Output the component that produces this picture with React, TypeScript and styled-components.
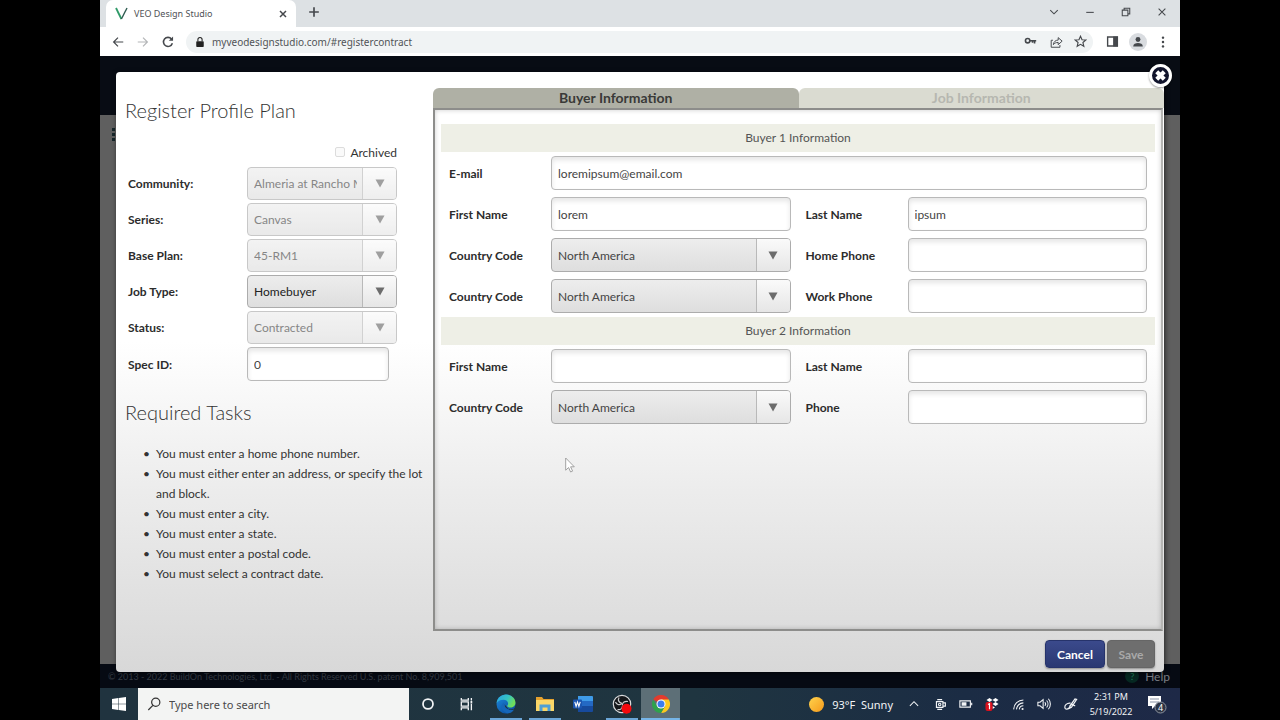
import React, { useId } from 'react';
import styled, { createGlobalStyle, css } from 'styled-components';

const system = `'Noto Sans', 'Open Sans', 'Liberation Sans', sans-serif`;
const lato = `Lato, 'Liberation Sans', sans-serif`;

const GlobalStyle = createGlobalStyle`
  *, *::before, *::after { box-sizing: border-box; }
  body { margin: 0; background: #000; font-family: ${lato}; font-size: 12px; color: #222; }
  button, input, select { font-family: inherit; font-size: inherit; }
  h1, h2, h3, ul { margin: 0; padding: 0; font-weight: inherit; }
`;

const Desktop = styled.div`
  display: flex;
  flex-direction: column;
  min-height: 100vh;
  margin: 0 100px;
`;

/* ---------- browser chrome ---------- */

const TabStrip = styled.div`
  display: flex;
  height: 27px;
  padding-left: 6px;
  background: #dde1e4;
  font-family: ${system};
`;

const BrowserTab = styled.div`
  display: flex;
  align-items: center;
  gap: 6px;
  width: 190px;
  padding: 0 7px 0 9px;
  background: #fff;
  border-radius: 7px 7px 0 0;
  font-size: 9px;
  color: #505256;

  span { flex: 1; }
`;

const BareButton = styled.button`
  display: grid;
  place-items: center;
  flex: none;
  padding: 0;
  border: 0;
  background: none;
  color: #45484c;
`;

const StripButton = styled(BareButton)`
  width: 36px;
  height: 24px;
`;

const WindowControls = styled.div`
  display: flex;
  margin-left: auto;
`;

const Toolbar = styled.div`
  display: flex;
  align-items: center;
  height: 29px;
  padding: 0 5px;
  background: #fff;
  font-family: ${system};
`;

const ToolButton = styled(BareButton)<{ $faint?: boolean }>`
  width: 25px;
  height: 24px;
  color: ${p => (p.$faint ? '#b4b6b8' : '#45484c')};
`;

const AddressBar = styled.div`
  display: flex;
  align-items: center;
  flex: 1;
  height: 22px;
  margin: 0 7px 0 6px;
  padding-left: 8px;
  background: #f0f3f4;
  border-radius: 11px;
`;

const Address = styled.input`
  flex: 1;
  min-width: 0;
  margin-left: 6px;
  padding: 0;
  border: 0;
  outline: 0;
  background: none;
  font-size: 10px;
  color: #505357;
`;

const Avatar = styled.span`
  display: grid;
  place-items: center;
  width: 18px;
  height: 18px;
  border-radius: 50%;
  background: #d9dce0;
`;

/* ---------- page ---------- */

const Page = styled.div`
  display: grid;
  flex: 1;
  grid-template: 1fr / 1fr;
  overflow: hidden;
`;

const Backdrop = styled.div`
  display: flex;
  flex-direction: column;
  grid-area: 1 / 1;
  background: #5f5f5f;
`;

const PageHeader = styled.div`
  height: 59px;
  background: #080c14;
`;

const PageBody = styled.div`
  flex: 1;
  padding: 13px 12px;
`;

const PageFooter = styled.footer`
  display: flex;
  align-items: center;
  justify-content: space-between;
  height: 24px;
  padding: 0 10px 0 8px;
  background: #060a13;
  font-size: 9px;
  color: #353a42;
`;

const HelpLink = styled.a`
  display: flex;
  align-items: center;
  gap: 6px;
  font-size: 12px;
  color: #7b7e84;
  text-decoration: none;
`;

const HelpBadge = styled.span`
  width: 14px;
  border-radius: 50%;
  background: #062821;
  color: #1d7a55;
  font-size: 10px;
  line-height: 14px;
  text-align: center;
`;

const Dialog = styled.section`
  position: relative;
  display: grid;
  grid-area: 1 / 1;
  grid-template: 1fr auto / 317px 1fr;
  margin: 16px;
  border-radius: 4px;
  background: linear-gradient(#fff 0, #fff 45%, #ececec 70%, #d8d8d8 100%);
  box-shadow: 1px 1px 5px #0009;
`;

const CloseButton = styled(BareButton)`
  position: absolute;
  top: -8px;
  right: -8px;
  width: 23px;
  height: 23px;
  border: 3px solid #fff;
  border-radius: 50%;
  background: #11142c;
  color: #fff;
  box-shadow: 0 1px 2px #0006;
`;

const Aside = styled.div`
  padding: 26px 8px 0 9px;
`;

const Heading = styled.h2`
  font-size: 20px;
  font-weight: 300;
  line-height: 24px;
  color: #333;
`;

const ArchivedLabel = styled.label`
  display: flex;
  align-items: center;
  justify-content: flex-end;
  gap: 5px;
  height: 20px;
  margin: 20px 28px 5px 0;
  font-size: 12px;
  color: #333;

  input {
    appearance: none;
    width: 10px;
    height: 10px;
    margin: 0;
    border: 1px solid #dcdcdc;
    border-radius: 2px;
    background: #fafafa;
  }
`;

const ProfileForm = styled.form`
  display: grid;
  grid-template-columns: 119px 150px;
  row-gap: 3px;
  align-items: center;
  padding-left: 3px;
  margin-bottom: 19px;
`;

const FieldLabel = styled.label<{ $second?: boolean }>`
  padding-left: ${p => (p.$second ? 15 : 0)}px;
  font-size: 12px;
  font-weight: 700;
  color: #2c2c2c;
`;

const boxStyle = css`
  width: 100%;
  height: 34px;
  padding: 0 6px;
  border: 1px solid #b9b9b9;
  border-radius: 4px;
  outline: 0;
  font-size: 12px;
`;

const TextBox = styled.input<{ $wide?: boolean; $narrow?: boolean }>`
  ${boxStyle}
  grid-column: ${p => (p.$wide ? 'span 3' : 'auto')};
  width: ${p => (p.$narrow ? '142px' : '100%')};
  background: #fff;
  box-shadow: inset 0 3px 5px #0000001a;
  color: #444;
`;

const SelectShell = styled.div<{ $muted?: boolean }>`
  display: grid;
  opacity: ${p => (p.$muted ? 0.65 : 1)};
`;

const SelectBox = styled.select<{ $short?: boolean; $dark?: boolean }>`
  ${boxStyle}
  grid-area: 1 / 1;
  height: ${p => (p.$short ? 33 : 34)}px;
  padding-right: 39px;
  appearance: none;
  border-color: #acacac;
  background: linear-gradient(#ededed, #dedede);
  color: ${p => (p.$dark ? '#222' : '#444')};
  opacity: 1;
`;

const SelectArrow = styled.span`
  display: grid;
  place-items: center;
  grid-area: 1 / 1;
  justify-self: end;
  width: 34px;
  margin: 1px 1px 1px 0;
  border-left: 1px solid #b9b9b9;
  border-radius: 0 3px 3px 0;
  background: linear-gradient(#fafafa, #e6e6e6);
  color: #6c6c6c;
  pointer-events: none;
`;

const TaskList = styled.ul`
  margin-top: 20px;
  padding-left: 31px;
  font-size: 12px;
  line-height: 20px;
  list-style-type: '•\\00a0\\00a0';
  color: #333;
`;

const Main = styled.div`
  display: flex;
  flex-direction: column;
  padding-top: 16px;
`;

const TabList = styled.div`
  display: grid;
  grid-template-columns: 1fr 1fr;
`;

const FormTab = styled.button<{ $active?: boolean }>`
  height: 20px;
  padding: 0;
  border: 0;
  border-radius: 6px 6px 0 0;
  background: ${p => (p.$active ? '#afb0a5' : '#dadbd1')};
  color: ${p => (p.$active ? '#3a3a38' : '#b6b7b0')};
  font-size: 14px;
  font-weight: 700;
  line-height: 20px;
`;

const Panel = styled.div`
  position: relative;
  flex: 1;
  padding: 14px 6px;
  margin-right: 1px;
  border: 2px solid #8d8d8b;
  border-right-color: #b5b5b3;
  box-shadow: inset 0 0 5px #0003;
`;

const Band = styled.h3`
  height: 28px;
  background: #eeefe6;
  color: #555;
  font-size: 12px;
  line-height: 28px;
  text-align: center;
`;

const BuyerFields = styled.div`
  display: grid;
  grid-template-columns: 102px 1fr 117px 1fr;
  row-gap: 7px;
  align-items: center;
  padding: 4px 8px;
`;

const Pointer = styled.svg`
  position: absolute;
  top: 347px;
  left: 130px;
`;

const Actions = styled.div`
  display: flex;
  grid-column: 1 / -1;
  justify-content: flex-end;
  gap: 2px;
  padding: 9px 9px 4px;
`;

const ActionButton = styled.button<{ $primary?: boolean }>`
  width: ${p => (p.$primary ? 60 : 48)}px;
  height: 28px;
  padding: 0;
  border: 1px solid ${p => (p.$primary ? '#26336b' : '#666')};
  border-radius: 4px;
  background: ${p => (p.$primary ? 'linear-gradient(#3b4a8c, #2a3872)' : '#6e6e6e')};
  color: ${p => (p.$primary ? '#fff' : '#a9a9a9')};
  box-shadow: 0 1px 2px #0005;
  font-size: 12px;
  font-weight: 700;
`;

/* ---------- taskbar ---------- */

const Taskbar = styled.div`
  display: flex;
  height: 32px;
  background: linear-gradient(90deg, #20333f, #1f3540 55%, #1b2c44 80%, #1e2947);
  font-family: ${system};
  color: #f2f4f6;
`;

const StartButton = styled(BareButton)`
  width: 38px;
  color: #fff;
`;

const SearchBox = styled.label`
  display: flex;
  align-items: center;
  gap: 8px;
  width: 271px;
  padding-left: 9px;
  background: #f3f4f3;
  color: #333;

  input {
    flex: 1;
    min-width: 0;
    padding: 0;
    border: 0;
    outline: 0;
    background: none;
    font-size: 11px;
  }
  input::placeholder { color: #4a4a4a; opacity: 1; }
`;

const AppStrip = styled.div`
  display: flex;
  width: 271px;
`;

const AppButton = styled(BareButton)<{ $open?: boolean; $active?: boolean }>`
  flex: 1;
  color: #f2f4f6;
  background: ${p =>
    p.$active
      ? 'linear-gradient(#76b5e8, #76b5e8) bottom / 100% 2px no-repeat #5d6f77'
      : p.$open
        ? 'linear-gradient(#6ba5d6, #6ba5d6) bottom / 32px 2px no-repeat'
        : 'none'};
`;

const Tray = styled.div`
  display: flex;
  align-items: center;
  margin-left: auto;
`;

const Weather = styled.div`
  display: flex;
  align-items: center;
  gap: 8px;
  margin-right: 8px;
  font-size: 11px;
  white-space: pre;
`;

const TrayIcon = styled.span`
  display: grid;
  place-items: center;
  width: 26px;
  height: 32px;
`;

const Sun = styled.span`
  width: 15px;
  height: 15px;
  border-radius: 50%;
  background: linear-gradient(135deg, #ffd34d, #f59a1c);
`;

const Clock = styled.div`
  width: 56px;
  font-size: 9px;
  line-height: 15px;
  text-align: center;
`;

const Notices = styled(BareButton)`
  width: 36px;
  height: 32px;
  margin-right: 5px;
  color: #fff;
`;

/* ---------- pieces ---------- */

type IconProps = { children: React.ReactNode; size?: number; box?: number; weight?: number };

function Icon({ children, size = 14, box = 16, weight = 1.4 }: IconProps) {
  return (
    <svg width={size} height={size} viewBox={`0 0 ${box} ${box}`} fill="none" stroke="currentColor" strokeWidth={weight} aria-hidden="true">
      {children}
    </svg>
  );
}

type SelectProps = { label: string; value: string; muted?: boolean; short?: boolean; dark?: boolean };

function SelectField({ label, value, muted, short, dark }: SelectProps) {
  const id = useId();
  return (
    <>
      <FieldLabel htmlFor={id}>{label}</FieldLabel>
      <SelectShell $muted={muted}>
        <SelectBox id={id} $short={short} $dark={dark} disabled={muted}>
          <option>{value}</option>
        </SelectBox>
        <SelectArrow>
          <svg width="10" height="9" viewBox="0 0 10 9" aria-hidden="true">
            <path d="M0.5 0.5h9L5 8.5z" fill="currentColor" />
          </svg>
        </SelectArrow>
      </SelectShell>
    </>
  );
}

type TextProps = { label: string; value?: string; second?: boolean; wide?: boolean; narrow?: boolean };

function TextField({ label, value = '', second, wide, narrow }: TextProps) {
  const id = useId();
  return (
    <>
      <FieldLabel htmlFor={id} $second={second}>{label}</FieldLabel>
      <TextBox id={id} type="text" defaultValue={value} $wide={wide} $narrow={narrow} />
    </>
  );
}

const tasks = [
  'You must enter a home phone number.',
  'You must either enter an address, or specify the lot and block.',
  'You must enter a city.',
  'You must enter a state.',
  'You must enter a postal code.',
  'You must select a contract date.',
];

function Browser() {
  return (
    <>
      <TabStrip>
        <BrowserTab>
          <svg width="13" height="13" viewBox="0 0 13 13" aria-hidden="true">
            <path d="M1 1l5.4 11" stroke="#2f9a68" strokeWidth="1.8" fill="none" />
            <path d="M12 1L6.4 12" stroke="#2e5b50" strokeWidth="1.4" fill="none" />
          </svg>
          <span>VEO Design Studio</span>
          <BareButton aria-label="Close tab">
            <Icon size={12}><path d="M4 4l8 8M12 4l-8 8" strokeWidth="2" /></Icon>
          </BareButton>
        </BrowserTab>
        <StripButton aria-label="New tab">
          <Icon size={14}><path d="M8 2.500v11M2.500 8h11" strokeWidth="1.900" /></Icon>
        </StripButton>
        <WindowControls>
          <StripButton aria-label="Search tabs"><Icon size={12}><path d="M3 5.500l5 5 5-5" /></Icon></StripButton>
          <StripButton aria-label="Minimize"><Icon size={12}><path d="M3 8.500h10" /></Icon></StripButton>
          <StripButton aria-label="Restore">
            <Icon size={12}><path d="M3 5.500h7.500v7.500H3zM5.500 5.500V3H13v7.500h-2.500" /></Icon>
          </StripButton>
          <StripButton aria-label="Close"><Icon size={12}><path d="M3.500 3.500l9 9M12.500 3.500l-9 9" /></Icon></StripButton>
        </WindowControls>
      </TabStrip>
      <Toolbar>
        <ToolButton aria-label="Back"><Icon><path d="M14 8H3M8 3L3 8l5 5" /></Icon></ToolButton>
        <ToolButton aria-label="Forward" $faint><Icon><path d="M2 8h11M8 3l5 5-5 5" /></Icon></ToolButton>
        <ToolButton aria-label="Reload">
          <Icon><path d="M13 9.500A5.200 5.200 0 1 1 12 4.500" strokeWidth="1.800" /><path d="M13.800 1.800v4.900H8.900z" fill="currentColor" stroke="none" /></Icon>
        </ToolButton>
        <AddressBar>
          <Icon size={12}>
            <rect x="3" y="7" width="10" height="7.500" rx="1" fill="currentColor" stroke="none" />
            <path d="M5.200 7V4.800a2.800 2.800 0 0 1 5.600 0V7" />
          </Icon>
          <Address aria-label="Address" defaultValue="myveodesignstudio.com/#registercontract" />
          <ToolButton aria-label="Passwords">
            <Icon size={13}><circle cx="4.500" cy="7" r="2.700" strokeWidth="2" /><path d="M7 7h8M13 7v3.500M10.500 7v2.500" strokeWidth="2" /></Icon>
          </ToolButton>
          <ToolButton aria-label="Share">
            <Icon><path d="M4.500 6H2.500v8h10v-2.500M5 11c.4-3.500 2.500-5 5.500-5.200V3L15 7l-4.500 4V8.500C8 8.500 6.500 9.200 5 11z" strokeWidth="1.100" /></Icon>
          </ToolButton>
          <ToolButton aria-label="Bookmark">
            <Icon size={13}><path d="M8 1.500l1.900 4.300 4.700.4-3.600 3.100 1.100 4.600L8 11.500l-4.100 2.400L5 9.300 1.400 6.200l4.700-.4z" /></Icon>
          </ToolButton>
        </AddressBar>
        <ToolButton aria-label="Side panel">
          <Icon size={13}><path d="M2 2.500h12v11H2z" strokeWidth="1.700" /><path d="M9.500 2.500H14v11H9.500z" fill="currentColor" /></Icon>
        </ToolButton>
        <ToolButton aria-label="Profile">
          <Avatar>
            <Icon size={14}><g fill="currentColor" stroke="none"><circle cx="8" cy="5.200" r="2.800" /><path d="M2.500 13c0-5 11-5 11 0z" /></g></Icon>
          </Avatar>
        </ToolButton>
        <ToolButton aria-label="Menu">
          <Icon><g fill="currentColor" stroke="none"><circle cx="8" cy="3" r="1.400" /><circle cx="8" cy="8" r="1.400" /><circle cx="8" cy="13" r="1.400" /></g></Icon>
        </ToolButton>
      </Toolbar>
    </>
  );
}

function PlanDialog() {
  return (
    <Dialog role="dialog" aria-label="Register Profile Plan">
      <Aside>
        <Heading>Register Profile Plan</Heading>
        <ArchivedLabel><input type="checkbox" disabled />Archived</ArchivedLabel>
        <ProfileForm>
          <SelectField label="Community:" value="Almeria at Rancho M" muted short />
          <SelectField label="Series:" value="Canvas" muted short />
          <SelectField label="Base Plan:" value="45-RM1" muted short />
          <SelectField label="Job Type:" value="Homebuyer" short dark />
          <SelectField label="Status:" value="Contracted" muted short />
          <TextField label="Spec ID:" value="0" narrow />
        </ProfileForm>
        <Heading>Required Tasks</Heading>
        <TaskList>
          {tasks.map(task => <li key={task}>{task}</li>)}
        </TaskList>
      </Aside>
      <Main>
        <TabList role="tablist">
          <FormTab role="tab" aria-selected="true" $active>Buyer Information</FormTab>
          <FormTab role="tab" aria-selected="false">Job Information</FormTab>
        </TabList>
        <Panel role="tabpanel">
          <Band>Buyer 1 Information</Band>
          <BuyerFields>
            <TextField label="E-mail" value="loremipsum@email.com" wide />
            <TextField label="First Name" value="lorem" />
            <TextField label="Last Name" value="ipsum" second />
            <SelectField label="Country Code" value="North America" />
            <TextField label="Home Phone" second />
            <SelectField label="Country Code" value="North America" />
            <TextField label="Work Phone" second />
          </BuyerFields>
          <Band>Buyer 2 Information</Band>
          <BuyerFields>
            <TextField label="First Name" />
            <TextField label="Last Name" second />
            <SelectField label="Country Code" value="North America" />
            <TextField label="Phone" second />
          </BuyerFields>
          <Pointer width="10" height="16" viewBox="0 0 10 16" aria-hidden="true">
            <path d="M0.700 1v12.200l2.900-2.700 2 4.500 2-.9-2-4.300h3.700z" fill="#fff" stroke="#999" strokeWidth="0.900" />
          </Pointer>
        </Panel>
      </Main>
      <Actions>
        <ActionButton type="button" $primary>Cancel</ActionButton>
        <ActionButton type="button" disabled>Save</ActionButton>
      </Actions>
      <CloseButton aria-label="Close dialog">
        <Icon size={15}><path d="M4 4l8 8M12 4l-8 8" strokeWidth="4.500" /></Icon>
      </CloseButton>
    </Dialog>
  );
}

function WindowsTaskbar() {
  return (
    <Taskbar>
      <StartButton aria-label="Start">
        <svg width="14" height="14" viewBox="0 0 14 14" fill="currentColor" aria-hidden="true">
          <path d="M0 2l6.300-.9v5.600H0zM6.800 1L14 0v6.700H6.800zM0 7.200h6.300v5.700L0 12zM6.800 7.200H14V14l-7.200-1z" />
        </svg>
      </StartButton>
      <SearchBox>
        <Icon size={14}><circle cx="10" cy="6" r="4.700" /><path d="M6.700 9.500L1.500 14.800" /></Icon>
        <input type="search" aria-label="Search" placeholder="Type here to search" />
      </SearchBox>
      <AppStrip>
        <AppButton aria-label="Cortana"><Icon size={14}><circle cx="8" cy="8" r="5.700" strokeWidth="2" /></Icon></AppButton>
        <AppButton aria-label="Task view">
          <Icon size={14}><path d="M1.500 1v2.500h8V1M1.500 15v-2.500h8V15M1.500 5.500h8v5h-8zM13 1v3M13 8v7" strokeWidth="1.500" /><path d="M12 4.500h2v3h-2z" fill="currentColor" stroke="none" /></Icon>
        </AppButton>
        <AppButton aria-label="Edge" $open>
          <svg width="20" height="20" viewBox="0 0 20 20" aria-hidden="true">
            <defs>
              <linearGradient id="edgeTop" x1="0" y1="0" x2="1" y2="0.400"><stop offset="0" stopColor="#2aa3e6" /><stop offset="0.600" stopColor="#35c4c4" /><stop offset="1" stopColor="#6fdd5a" /></linearGradient>
              <linearGradient id="edgeLow" x1="0" y1="0" x2="0.700" y2="1"><stop offset="0" stopColor="#1d8be0" /><stop offset="1" stopColor="#0c4f9e" /></linearGradient>
            </defs>
            <circle cx="10" cy="10" r="9.500" fill="url(#edgeLow)" />
            <path d="M0.500 9.500C1 4 5 .5 10 .5c5.500 0 9.500 4 9.500 8.200 0 3-2.300 4.800-5 4.800-2 0-3.300-.8-3.300-1.500 0-.6.900-1 .9-2.500 0-2-2-3.700-4.700-3.700C4 5.800 1.500 7.200.5 9.500z" fill="url(#edgeTop)" />
            <path d="M8.700 10.500c-.3 3.500 3.500 6.200 9.300 4.200l1.500-1.700.5 4-4 2.500z" fill="#20343f" />
            <path d="M8 8.500c-4 2.500-3 9 3 10.800 3 .2 5.800-1.500 7-3.900-5 2-10.500-1-10-6.900z" fill="#1666b8" />
          </svg>
        </AppButton>
        <AppButton aria-label="File Explorer" $open>
          <svg width="18" height="16" viewBox="0 0 18 16" aria-hidden="true">
            <path d="M0 1h6l1.500 2H18v12H0z" fill="#e5a12e" />
            <path d="M0 4h18v11H0z" fill="#fbd768" />
            <path d="M3.500 15V8.500h11V15h-3v-3.500h-5V15z" fill="#4d9fd6" />
          </svg>
        </AppButton>
        <AppButton aria-label="Word">
          <svg width="20" height="16" viewBox="0 0 20 16" aria-hidden="true">
            <path d="M5 0h14a1 1 0 0 1 1 1v4H5z" fill="#3f9be8" />
            <path d="M5 5h15v5H5z" fill="#2469c4" />
            <path d="M5 10h15v5a1 1 0 0 1-1 1H5z" fill="#174a9c" />
            <rect y="3.500" width="9" height="9" rx="1" fill="#1b55b0" />
            <path d="M1.800 5.800l1.300 4.600 1.400-4.300 1.400 4.300 1.300-4.600" fill="none" stroke="#fff" strokeWidth="1.100" />
          </svg>
        </AppButton>
        <AppButton aria-label="OBS Studio" $open>
          <svg width="20" height="20" viewBox="0 0 20 20" aria-hidden="true">
            <circle cx="10" cy="10" r="8.700" fill="#15171a" stroke="#d8dadc" strokeWidth="1.200" />
            <path d="M7 3.500c-1.500 3 .2 5.500 3 5.800M16 7.500c-3.200-.8-5.500 1-5.700 3.500M5.500 15.500c3 .8 5-1.200 5-4M3.500 8c1 2.500 3.500 3.500 6 2" fill="none" stroke="#c9cbcd" strokeWidth="1.200" />
            <circle cx="14.500" cy="14.800" r="5" fill="#f5080c" />
          </svg>
        </AppButton>
        <AppButton aria-label="Chrome" $active>
          <svg width="18" height="18" viewBox="0 0 18 18" aria-hidden="true">
            <path d="M9 9L1.200 4.500A9 9 0 0 1 16.800 4.500z" fill="#e33b2e" />
            <path d="M9 4.500h7.800A9 9 0 0 1 9 18l3.900-6.700z" fill="#fbc91f" />
            <path d="M1.200 4.500L5.100 11.300 9 13.500V18A9 9 0 0 1 1.200 4.500z" fill="#2fa24c" />
            <path d="M9 18l3.900-6.700L9 13z" fill="#2fa24c" />
            <circle cx="9" cy="9" r="4.500" fill="#fff" />
            <circle cx="9" cy="9" r="3.500" fill="#3b7ded" />
          </svg>
        </AppButton>
      </AppStrip>
      <Tray>
        <Weather><Sun /><span>93°F  Sunny</span></Weather>
        <TrayIcon><Icon size={12}><path d="M2.500 10.500L8 5l5.500 5.500" /></Icon></TrayIcon>
        <TrayIcon>
          <Icon size={13}><path d="M3 4.500h8v7H3zM11 6h3v4h-3M4 2h6M4 14h6" /><circle cx="7" cy="8" r="1.500" /></Icon>
        </TrayIcon>
        <TrayIcon>
          <Icon size={14}><path d="M1 4.500h12v7H1zM14.500 6.500v3" strokeWidth="1.300" /><path d="M3 6h5.500v4H3z" fill="currentColor" stroke="none" /></Icon>
        </TrayIcon>
        <TrayIcon>
          <svg width="14" height="14" viewBox="0 0 14 14" aria-hidden="true">
            <path d="M4.500 1L7.500 3l-3 2-3-2zM10.500 1l3 2-3 2-3-2zM10.500 5l3 2-3 2-3-2zM7.500 9l2.500 1.500L7.500 12z" fill="#fff" />
            <rect x="0.500" y="5" width="7" height="9" rx="2" fill="#d9101c" />
            <path d="M3 7.500L4.500 6.700v5.500" fill="none" stroke="#fff" strokeWidth="1.200" />
          </svg>
        </TrayIcon>
        <TrayIcon>
          <Icon size={13}><path d="M2 14A12 12 0 0 1 14 2.500M5.500 14A8.500 8.500 0 0 1 14 6M9 14a5 5 0 0 1 5-4.500" strokeWidth="1.300" /><circle cx="13" cy="13.500" r="1.300" fill="currentColor" stroke="none" /></Icon>
        </TrayIcon>
        <TrayIcon>
          <Icon size={14}><path d="M1 6h2.500L7 3v10L3.500 10H1zM9 6a3 3 0 0 1 0 4M11 4a6 6 0 0 1 0 8M13 2a9 9 0 0 1 0 12" strokeWidth="1.200" /></Icon>
        </TrayIcon>
        <TrayIcon>
          <Icon size={15}><path d="M14.500 2.500L9 11l-2 1 .3-2.300 5.500-7.700zM8 6.500C4 6 1.500 9 2 11.500c.5 2 3.500 2 5-.5s1.500-3.500 3-3.200 1 2 3 1.200" strokeWidth="1.300" /></Icon>
        </TrayIcon>
        <Clock>2:31 PM<br />5/19/2022</Clock>
        <Notices aria-label="Notifications">
          <svg width="20" height="20" viewBox="0 0 20 20" aria-hidden="true">
            <path d="M1 2h13v10H8l-3 3v-3H1z" fill="#fff" />
            <path d="M3 5h9M3 8h9" stroke="#8a93a5" strokeWidth="1" />
            <circle cx="13.500" cy="13.500" r="5.500" fill="#2c3445" stroke="#8d94a0" strokeWidth="1" />
            <text x="13.500" y="17" fill="#fff" fontSize="9" textAnchor="middle">4</text>
          </svg>
        </Notices>
      </Tray>
    </Taskbar>
  );
}

export default function App() {
  return (
    <>
      <GlobalStyle />
      <Desktop>
        <Browser />
        <Page>
          <Backdrop>
            <PageHeader />
            <PageBody>
              <svg width="4" height="14" viewBox="0 0 4 14" fill="#16262a" aria-hidden="true">
                <path d="M0 0h3v3H0zM0 5h3v3H0zM0 10h3v3H0z" />
              </svg>
            </PageBody>
            <PageFooter>
              <span>© 2013 - 2022 BuildOn Technologies, Ltd. - All Rights Reserved U.S. patent No. 8,909,501</span>
              <HelpLink href="#help"><HelpBadge>?</HelpBadge>Help</HelpLink>
            </PageFooter>
          </Backdrop>
          <PlanDialog />
        </Page>
        <WindowsTaskbar />
      </Desktop>
    </>
  );
}
